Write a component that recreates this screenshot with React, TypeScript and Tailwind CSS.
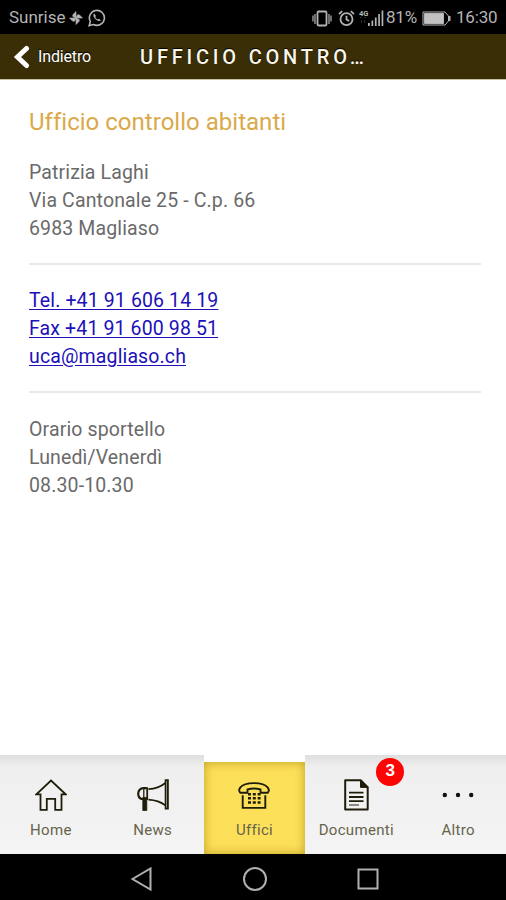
import type { ReactNode } from "react";

const ink = "#1f1d08";

function VibrateIcon() {
  return (
    <svg width="20" height="17" viewBox="0 0 20 17" fill="none" stroke="#b4b4b4" strokeWidth="1.8">
      <rect x="5.500" y="1.500" width="9" height="14" rx="1.200" />
      <path d="M3 4v10M17 4v10M1 5.500v6M19 5.500v6" strokeWidth="1.200" />
    </svg>
  );
}

function AlarmIcon() {
  return (
    <svg width="17" height="17" viewBox="0 0 17 17" fill="none" stroke="#b4b4b4" strokeWidth="1.800">
      <circle cx="8.500" cy="9.200" r="6" />
      <path d="M8.500 5.800v3.700l2.600 1.600M1 4.200 4.200 1.200M16 4.200l-3.200-3" />
    </svg>
  );
}

function SignalIcon() {
  return (
    <svg width="25" height="18" viewBox="0 0 25 18" fill="#b4b4b4">
      <path d="M9 14h1.800v3H9zM12.500 11.500h1.700V17h-1.700zM15.900 8.500h1.700V17h-1.700zM19.200 5h1.700v12h-1.700zM22.600 1.500h1.700V17h-1.700z" />
      <path d="M1 8h2v1H1zM5 8h2v1H5zM2 11h1v3H2zM5 11h1v3H5z" opacity=".25" />
      <text x="0" y="6.800" fontFamily="Roboto, sans-serif" fontSize="7.500" fontWeight="700">4G</text>
    </svg>
  );
}

function PinwheelIcon() {
  return (
    <svg width="14" height="14" viewBox="0 0 14 14" fill="#b4b4b4">
      <path d="M7 7V.5L3.800 3.700V5.500zM7 7h6.500l-3.200-3.200H8.500zM7 7v6.500l3.200-3.200V8.500zM7 7H.5l3.200 3.200h1.800z" stroke="#b4b4b4" strokeWidth=".6" />
    </svg>
  );
}

function WhatsAppIcon() {
  return (
    <svg width="18" height="18" viewBox="0 0 18 18" fill="none" stroke="#b4b4b4" strokeWidth="1.600">
      <path d="M1.200 16.600l1.200-4A7.500 7.500 0 1 1 5.400 15.500z" />
      <path d="M6.300 4.600c-1.700 1.300-.8 3.700 1 5.500 1.900 1.900 4.300 2.800 5.500 1.100l-2-1.500-1.100.9c-1.200-.5-2-1.400-2.500-2.500l.8-1z" fill="#b4b4b4" stroke="none" />
    </svg>
  );
}

function HomeIcon() {
  return (
    <svg width="32" height="32" viewBox="0 0 32 32" fill="none" stroke={ink} strokeWidth="1.800">
      <path d="M1.300 15.300 16 1.500l14.700 13.800h-4.200V30.800h-6.300v-11h-8.400v11H5.500V15.300z" />
    </svg>
  );
}

function MegaphoneIcon() {
  return (
    <svg width="32" height="32" viewBox="0 0 32 32" fill="none" stroke={ink} strokeWidth="1.800">
      <path d="M28.600 1.200h2.300v28.400h-2.300z" />
      <path d="M28.400 4C24 7.500 18.500 9.800 11.500 10.200M11.500 20.700c6.900.5 12.500 2.400 16.900 5.700" />
      <path d="M9.800 9.200H6.500C3.300 9.200 1.200 11.600 1.200 14.800c0 3.200 2 5.200 4.800 5.400" strokeWidth="2.200" />
      <path d="M6.800 9.800v10" strokeWidth="1.300" />
      <path d="M10.200 8.300V21" strokeWidth="1.800" />
      <path d="M5.800 18.500h4V31.500h-4z" fill={ink} strokeWidth=".8" />
    </svg>
  );
}

function PhoneIcon() {
  return (
    <svg width="32" height="27" viewBox="0 0 32 27" fill="none" stroke={ink} strokeWidth="1.900">
      <path d="M9.500 10.700H2.300C1 9.500 1 7.300 2.200 5.600 4.600 2.500 9.500 1.100 16 1.100s11.400 1.400 13.800 4.500c1.200 1.700 1.200 3.900-.1 5.100h-7.200V7.500C19 6.500 13 6.500 9.500 7.500z" />
      <path d="M4.700 13.200v12.700h22.600V13.200" />
      <path d="M10 12.200h3M14.800 12.200h3M19.600 12.200h3M10 16.300h3M14.800 16.300h3M19.600 16.300h3M10 20.500h3M14.800 20.500h3M19.600 20.500h3" strokeWidth="2.500" />
    </svg>
  );
}

function DocumentIcon() {
  return (
    <svg width="25" height="32" viewBox="0 0 25 32" fill="none" stroke={ink} strokeWidth="2">
      <path d="M1.200 1.200h15.500l7 7V30.500H1.200z" strokeLinejoin="round" />
      <path d="M16.500 1.200v7.200h7.200z" fill={ink} strokeWidth="1" />
      <path d="M5 13.700h14.500M5 18h14.500M5 22.200h14.500" strokeWidth="1.800" />
      <path d="M5 26h10" strokeWidth="1.500" opacity=".65" />
    </svg>
  );
}

function DotsIcon() {
  return (
    <svg width="34" height="32" viewBox="0 0 34 32" fill="#111">
      <circle cx="3.800" cy="16" r="2.200" />
      <circle cx="17" cy="16" r="2.200" />
      <circle cx="30.200" cy="16" r="2.200" />
    </svg>
  );
}

function Tab({ label, icon, active, badge }: { label: string; icon: ReactNode; active?: boolean; badge?: number }) {
  return (
    <div
      className={
        active
          ? "relative mt-[7px] flex h-[92px] min-w-0 flex-1 flex-col items-center bg-[#fde05a] pt-[17px] shadow-[inset_0_0_10px_1px_rgba(145,115,0,0.5)]"
          : "relative flex h-[99px] min-w-0 flex-1 flex-col items-center bg-linear-to-b from-[#dedede] via-[#efefef] via-[12px] to-[#f4f4f4] pt-6"
      }
    >
      <div className="flex h-8 items-center justify-center">{icon}</div>
      <span className="mt-[10px] text-[15px] leading-[18px] tracking-[0.3px] whitespace-nowrap text-[#66634d]">{label}</span>
      {badge !== undefined && (
        <span className="absolute top-[3px] right-[3px] flex size-7 items-center justify-center rounded-full bg-[#fb0505] pb-[3px] font-['Liberation_Sans',sans-serif] text-[17px] font-bold text-white">
          {badge}
        </span>
      )}
    </div>
  );
}

export default function App() {
  return (
    <div className="flex h-[900px] w-[506px] flex-col overflow-hidden bg-white font-[Roboto,sans-serif]">
      <div className="flex h-[34px] shrink-0 items-center justify-between bg-black pt-[2px] pr-[8px] pl-[9px] text-[#b4b4b4]">
        <div className="flex items-center">
          <span className="w-[57px] text-[17px]">Sunrise</span>
          <span className="ml-[3px]"><PinwheelIcon /></span>
          <span className="ml-[5px]"><WhatsAppIcon /></span>
        </div>
        <div className="flex items-center">
          <VibrateIcon />
          <span className="ml-[6px]"><AlarmIcon /></span>
          <span className="ml-[4px]"><SignalIcon /></span>
          <span className="ml-[2px] w-[33px] text-[17px] tracking-[-0.200px] whitespace-nowrap">81%</span>
          <svg className="ml-[3px]" width="29" height="15" viewBox="0 0 29 15" fill="none" stroke="#b4b4b4">
            <path d="M1 1h22l3.500 4v5L23 14H1z" />
            <path d="M2.500 2.500h19v10h-19z" fill="#c2c2c2" />
            <path d="M27.500 5v5" strokeWidth="2" />
          </svg>
          <span className="ml-[5px] w-[42px] text-[17px] tracking-[-0.200px] whitespace-nowrap">16:30</span>
        </div>
      </div>

      <header className="flex h-[46px] shrink-0 items-center border-b border-[#c5bfa3] bg-[#3a2e06] pl-[13px] text-white">
        <svg width="17" height="24" viewBox="0 0 17 24" fill="none" stroke="white" strokeWidth="5">
          <path d="M13.500 3.500 4.500 12l9 8.500" strokeLinecap="round" />
        </svg>
        <span className="ml-[8px] w-[53px] text-[16px] tracking-[-0.150px] whitespace-nowrap [text-shadow:0_-1px_1px_#000]">Indietro</span>
        <h1 className="ml-[49px] pt-px text-[20px] font-medium tracking-[3.800px] whitespace-nowrap text-[#faf6e9] [text-shadow:0_-1px_1px_#000]">UFFICIO CONTRO…</h1>
      </header>

      <main className="flex-1 pt-[26px] pr-[25px] pl-[29px] text-[19.500px] leading-[28.300px] tracking-[0.130px] text-[#6a6a6a]">
        <h2 className="text-[24px] leading-[32px] font-normal tracking-[0.020px] text-[#dba949]">Ufficio controllo abitanti</h2>
        <p className="mt-[20.500px]">
          Patrizia Laghi<br />
          Via Cantonale 25 - C.p. 66<br />
          6983 Magliaso
        </p>
        <hr className="mt-[19.500px] border-t-2 border-[#e8e8e8]" />
        <div className="mt-[22px] flex flex-col items-start text-[#2010b8]">
          <a className="underline underline-offset-[2px]" href="#tel">Tel. +41 91 606 14 19</a>
          <a className="underline underline-offset-[2px]" href="#fax">Fax +41 91 600 98 51</a>
          <a className="underline underline-offset-[2px]" href="#mail">uca@magliaso.ch</a>
        </div>
        <hr className="mt-[19px] border-t-2 border-[#e8e8e8]" />
        <p className="mt-[23px]">
          Orario sportello<br />
          Lunedì/Venerdì<br />
          08.30-10.30
        </p>
      </main>

      <nav className="flex h-[99px] w-[509px] shrink-0">
        <Tab label="Home" icon={<HomeIcon />} />
        <Tab label="News" icon={<MegaphoneIcon />} />
        <Tab label="Uffici" icon={<PhoneIcon />} active />
        <Tab label="Documenti" icon={<DocumentIcon />} badge={3} />
        <Tab label="Altro" icon={<DotsIcon />} />
      </nav>

      <div className="flex h-[46px] shrink-0 items-center bg-black pt-[4px] pl-[130px]">
        <svg width="250" height="28" viewBox="0 0 250 28" fill="none" stroke="#b0b0b0" strokeWidth="2">
          <path d="M2.500 14 20.500 3.500v21z" />
          <circle cx="125" cy="14" r="11" />
          <path d="M228.500 4.500h19v19h-19z" />
        </svg>
      </div>
    </div>
  );
}
